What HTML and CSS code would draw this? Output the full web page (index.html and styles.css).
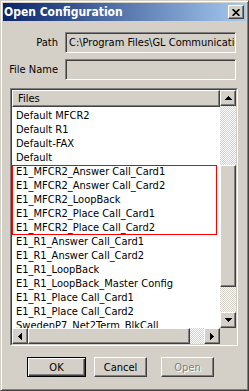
FILE: index.html
```html
<!DOCTYPE html>
<html lang="en">
  <head>
    <meta charset="UTF-8" />
    <title>Open Configuration</title>
    <link rel="stylesheet" href="styles.css">
  </head>
  <body>
    <div class="window">
      <!-- Title bar -->
      <div class="titlebar">
        <span class="title">Open Configuration</span>
        <div class="close raised">
          <svg width="8" height="7" viewBox="0 0 8 7"><path d="M0.6 0.2 L7.4 6.8 M7.4 0.2 L0.6 6.8" stroke="#000" stroke-width="1.7" fill="none"/></svg>
        </div>
      </div>

      <div class="client">
        <!-- Path / file name -->
        <div class="fields">
          <span class="label">Path</span>
          <div class="field sunken">C:\Program Files\GL Communications Inc</div>
          <span class="label">File Name</span>
          <div class="field sunken"></div>
        </div>

        <!-- File list -->
        <div class="list sunken">
          <div class="list-main">
            <div class="list-header raised">Files</div>
            <div class="rows">
              <div class="row">Default MFCR2</div>
              <div class="row">Default R1</div>
              <div class="row">Default-FAX</div>
              <div class="row">Default</div>
              <div class="highlight">
                <div class="row">E1_MFCR2_Answer Call_Card1</div>
                <div class="row">E1_MFCR2_Answer Call_Card2</div>
                <div class="row">E1_MFCR2_LoopBack</div>
                <div class="row">E1_MFCR2_Place Call_Card1</div>
                <div class="row">E1_MFCR2_Place Call_Card2</div>
              </div>
              <div class="row">E1_R1_Answer Call_Card1</div>
              <div class="row">E1_R1_Answer Call_Card2</div>
              <div class="row">E1_R1_LoopBack</div>
              <div class="row">E1_R1_LoopBack_Master Config</div>
              <div class="row">E1_R1_Place Call_Card1</div>
              <div class="row">E1_R1_Place Call_Card2</div>
              <div class="row">SwedenP7_Net2Term_BlkCall</div>
            </div>
          </div>

          <div class="vscroll">
            <div class="arrow raised">
              <svg width="7" height="4" viewBox="0 0 7 4"><path d="M3 0h1v1h1v1h1v1h1v1H0v-1h1v-1h1v-1h1z"/></svg>
            </div>
            <div class="track" style="height: 59px"></div>
            <div class="thumb raised" style="height: 122px"></div>
            <div class="track" style="height: 25px"></div>
            <div class="arrow raised">
              <svg width="7" height="4" viewBox="0 0 7 4"><path d="M0 0h7v1h-1v1h-1v1h-1v1h-1v-1h-1v-1h-1v-1H0z"/></svg>
            </div>
          </div>

          <div class="hscroll">
            <div class="arrow raised">
              <svg width="4" height="7" viewBox="0 0 4 7"><path d="M4 0v7h-1v-1h-1v-1h-1v-1h-1v-1h1v-1h1v-1h1v-1z"/></svg>
            </div>
            <div class="thumb raised" style="width: 162px"></div>
            <div class="track" style="width: 14px"></div>
            <div class="arrow raised">
              <svg width="4" height="7" viewBox="0 0 4 7"><path d="M0 0h1v1h1v1h1v1h1v1h-1v1h-1v1h-1v1H0z"/></svg>
            </div>
          </div>

          <div class="corner"></div>
        </div>

        <!-- Buttons -->
        <div class="buttons">
          <div class="button default">OK</div>
          <div class="button cancel">Cancel</div>
          <div class="button disabled">Open</div>
        </div>
      </div>
    </div>
  </body>
</html>
```

FILE: styles.css
```css
/* Global */
* {
  box-sizing: border-box;
}
body {
  margin: 0;
  font-family: "DejaVu Sans Condensed", "Liberation Sans", Arial, sans-serif;
  font-size: 11px;
  color: #000;
  background: #d4d0c8;
}

/* Classic 3D borders */
.raised {
  background: #d4d0c8;
  border: 1px solid;
  border-color: #fff #404040 #404040 #fff;
  box-shadow: inset -1px -1px #808080;
}
.sunken {
  border: 1px solid;
  border-color: #808080 #fff #fff #808080;
  box-shadow: inset 1px 1px #404040, inset -1px -1px #d4d0c8;
}

/* Window frame */
.window {
  width: 249px;
  height: 391px;
  display: flex;
  flex-direction: column;
  padding: 2px;
  border: 1px solid;
  border-color: #d4d0c8 #404040 #404040 #d4d0c8;
  box-shadow: inset 1px 1px #fff, inset -1px -1px #808080;
  background: #d4d0c8;
}
.titlebar {
  height: 18px;
  display: flex;
  align-items: center;
  justify-content: space-between;
  padding: 0 2px 0 1px;
  background: linear-gradient(to right, #0a246a, #a6caf0);
}
.title {
  color: #fff;
  font-weight: bold;
  font-size: 12px;
}
.close {
  width: 16px;
  height: 14px;
  display: flex;
  align-items: center;
  justify-content: center;
}

/* Client area */
.client {
  flex: 1;
  display: flex;
  flex-direction: column;
  padding: 11px 8px 0 7px;
}
.fields {
  display: grid;
  grid-template-columns: 48px 171px;
  column-gap: 7px;
  row-gap: 6px;
  align-items: center;
}
.label {
  justify-self: end;
  white-space: nowrap;
}
.field {
  height: 21px;
  padding: 0 3px;
  line-height: 19px;
  white-space: nowrap;
  overflow: hidden;
  background: #d4d0c8;
}

/* List box */
.list {
  margin-top: 8px;
  height: 258px;
  display: grid;
  grid-template-columns: 1fr 16px;
  grid-template-rows: 1fr 16px;
  background: #fff;
  border-width: 2px;
  border-color: #808080 #fff #fff #808080;
  border-style: solid;
  box-shadow: none;
  position: relative;
}
.list::before {
  content: "";
  position: absolute;
  inset: -1px;
  border: 1px solid;
  border-color: #404040 #d4d0c8 #d4d0c8 #404040;
  pointer-events: none;
  z-index: 2;
}
.list-main {
  overflow: hidden;
}
.list-header {
  height: 17px;
  line-height: 15px;
  padding-left: 5px;
}
.rows {
  padding-top: 2px;
}
.row {
  height: 14px;
  line-height: 14px;
  padding-left: 4px;
  white-space: nowrap;
}
.highlight {
  position: relative;
}
.highlight::after {
  content: "";
  position: absolute;
  top: 0;
  left: 0;
  right: 3px;
  bottom: 0;
  border: 1px solid #f00;
  pointer-events: none;
}

/* Scrollbars */
.vscroll {
  grid-row: 1;
  grid-column: 2;
  display: flex;
  flex-direction: column;
}
.hscroll {
  grid-row: 2;
  grid-column: 1;
  display: flex;
}
.arrow {
  width: 16px;
  height: 16px;
  flex: none;
  display: flex;
  align-items: center;
  justify-content: center;
}
.thumb {
  flex: none;
}
.vscroll .thumb {
  width: 16px;
}
.hscroll .thumb {
  height: 16px;
}
.track {
  flex: none;
  background: repeating-conic-gradient(#d4d0c8 0 25%, #fff 0 50%) 0 0 / 2px 2px;
}
.vscroll .track {
  width: 16px;
}
.hscroll .track {
  height: 16px;
}
.corner {
  grid-row: 2;
  grid-column: 2;
  background: #d4d0c8;
}

/* Buttons */
.buttons {
  display: flex;
  margin-top: 11px;
  padding-left: 17px;
}
.button {
  width: 53px;
  height: 20px;
  display: flex;
  align-items: center;
  justify-content: center;
  background: #d4d0c8;
  border: 1px solid;
  border-color: #fff #404040 #404040 #fff;
  box-shadow: inset -1px -1px #808080;
}
.button.default {
  width: 59px;
  border-color: #000;
  box-shadow: inset 1px 1px #fff, inset -1px -1px #404040, inset -2px -2px #808080;
}
.button.cancel {
  margin-left: 8px;
}
.button.disabled {
  margin-left: 14px;
  color: #808080;
  text-shadow: 1px 1px #fff;
}
```
